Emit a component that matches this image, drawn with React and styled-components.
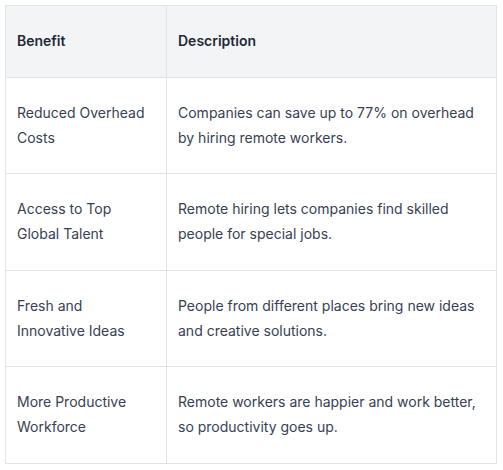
import React from "react";
import styled, { createGlobalStyle } from "styled-components";

const rows = [
  {
    benefit: "Reduced Overhead Costs",
    description: "Companies can save up to 77% on overhead by hiring remote workers.",
  },
  {
    benefit: "Access to Top Global Talent",
    description: "Remote hiring lets companies find skilled people for special jobs.",
  },
  {
    benefit: "Fresh and Innovative Ideas",
    description: "People from different places bring new ideas and creative solutions.",
  },
  {
    benefit: "More Productive Workforce",
    description: "Remote workers are happier and work better, so productivity goes up.",
  },
];

export default function App() {
  return (
    <>
      <GlobalStyle />
      <Wrapper>
        <Table>
          <colgroup>
            <col style={{ width: 161 }} />
            <col />
          </colgroup>
          <thead>
            <tr>
              <HeadCell>Benefit</HeadCell>
              <HeadCell>Description</HeadCell>
            </tr>
          </thead>
          <tbody>
            {rows.map((row) => (
              <tr key={row.benefit}>
                <Cell>{row.benefit}</Cell>
                <Cell>{row.description}</Cell>
              </tr>
            ))}
          </tbody>
        </Table>
      </Wrapper>
    </>
  );
}

const GlobalStyle = createGlobalStyle`
  body {
    margin: 0;
    background: #ffffff;
    font-family: Inter, "Liberation Sans", sans-serif;
  }
`;

const Wrapper = styled.div`
  padding: 5px 6px 5px 5px;
`;

const Table = styled.table`
  width: 492px;
  border-collapse: collapse;
  table-layout: fixed;
  border: 1px solid #e2e2e8;
  font-size: 14px;
  line-height: 24.75px;
`;

const HeadCell = styled.th`
  background: #f3f4f6;
  color: #1f2937;
  font-weight: 600;
  text-align: left;
  padding: 23px 12px 23px 11px;
  border: 1px solid #e2e2e8;
`;

const Cell = styled.td`
  color: #364153;
  font-weight: 400;
  padding: 23px 12px 23px 11px;
  border: 1px solid #e2e2e8;
  vertical-align: middle;
`;
